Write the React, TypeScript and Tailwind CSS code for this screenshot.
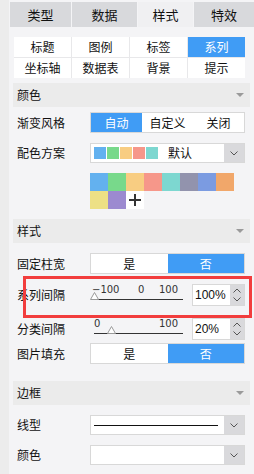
const font = { fontFamily: '"Noto Sans CJK SC", "Noto Sans", sans-serif' };

const topTabs = [
  { label: "类型", w: "w-[61px]" },
  { label: "数据", w: "w-[65px]" },
  { label: "样式", w: "w-[55px]", active: true },
  { label: "特效", w: "w-[60px]" },
];

const subTabs = ["标题", "图例", "标签", "系列", "坐标轴", "数据表", "背景", "提示"];

const schemeColors = ["bg-[#63b1ef]", "bg-[#78d98b]", "bg-[#f8cd82]", "bg-[#f6978a]", "bg-[#7dd7d0]"];

const palette = [
  "bg-[#63b1ef]",
  "bg-[#78d98b]",
  "bg-[#f8cd82]",
  "bg-[#f6978a]",
  "bg-[#7dd7d0]",
  "bg-[#9293ad]",
  "bg-[#7b9be1]",
  "bg-[#f1a76a]",
  "bg-[#ede085]",
  "bg-[#9c8ad0]",
];

function SectionHeader({ title }: { title: string }) {
  return (
    <div className="flex h-[24px] items-center justify-between bg-[#ebebeb] pl-[4px] pr-[6px] text-[12px] text-[#111]">
      <span>{title}</span>
      <span className="h-0 w-0 border-x-[4px] border-t-[4px] border-x-transparent border-t-[#9a9a9a]" />
    </div>
  );
}

function Row({ label, children, className = "" }: { label: string; children: React.ReactNode; className?: string }) {
  return (
    <div className={`flex items-center ${className}`}>
      <span className="w-[77px] pl-[4px] text-[12px] text-[#111]">{label}</span>
      <div className="w-[155px]">{children}</div>
    </div>
  );
}

function Toggle({ options, active }: { options: string[]; active: number }) {
  return (
    <div className="flex h-[21px] border border-[#d8d8d8] bg-white text-[12px]">
      {options.map((o, i) => (
        <div
          key={o}
          className={`flex flex-1 items-center justify-center ${i === active ? "bg-[#409cf5] text-white" : "text-[#111]"}`}
        >
          {o}
        </div>
      ))}
    </div>
  );
}

function Chevron() {
  return (
    <div className="flex w-[20px] items-center justify-center bg-[#d9d9dc]">
      <svg width="8" height="5" viewBox="0 0 8 5" fill="none" stroke="#555" strokeWidth="1">
        <path d="M0.5 0.5 L4 4 L7.5 0.5" />
      </svg>
    </div>
  );
}

function Select({ children }: { children?: React.ReactNode }) {
  return (
    <div className="flex h-[20px] border border-[#d8d8d8] bg-white">
      <div className="flex flex-1 items-center px-[3px]">{children}</div>
      <Chevron />
    </div>
  );
}

function Thumb() {
  return (
    <svg width="9" height="8" viewBox="0 0 9 8" className="absolute top-[8px]">
      <path d="M4.5 0.5 L8.5 7.5 L0.5 7.5 Z" fill="#fff" stroke="#999" strokeWidth="1" />
    </svg>
  );
}

function Slider({ labels, thumb, value }: { labels: { text: string; x: string }[]; thumb: string; value: string }) {
  return (
    <div className="flex items-center">
      <div className="relative h-[22px] w-[98px]">
        {labels.map((l) => (
          <span
            key={l.text}
            className={`absolute top-[1px] text-[10px] leading-[10px] text-[#333] ${l.x}`}
            style={{ fontFamily: '"DejaVu Sans", sans-serif' }}
          >
            {l.text}
          </span>
        ))}
        <div className="absolute left-[4px] top-[15px] h-px w-[89px] bg-[#333]" />
        <div className={`absolute ${thumb}`}>
          <Thumb />
        </div>
      </div>
      <div className="ml-[4px] flex h-[22px] w-[53px] border border-[#d8d8d8] bg-white">
        <div className="flex flex-1 items-center pl-[2px] text-[12px] text-[#111]" style={{ fontFamily: '"Liberation Sans", sans-serif' }}>
          {value}
        </div>
        <div className="flex w-[14px] flex-col items-center justify-center gap-[4px] bg-[#d9d9dc]">
          <svg width="8" height="5" viewBox="0 0 8 5" fill="none" stroke="#555" strokeWidth="1">
            <path d="M0.5 4.5 L4 1 L7.5 4.5" />
          </svg>
          <svg width="8" height="5" viewBox="0 0 8 5" fill="none" stroke="#555" strokeWidth="1">
            <path d="M0.5 0.5 L4 4 L7.5 0.5" />
          </svg>
        </div>
      </div>
    </div>
  );
}

export default function App() {
  return (
    <div className="relative flex h-[474px] w-[254px] overflow-hidden bg-[#f4f4f6]" style={font}>
      <div className="w-[10px] bg-[#ececec]" />
      <div className="flex-1 pt-[2px]">
        <div className="flex gap-px pl-px">
          {topTabs.map((t) => (
            <div
              key={t.label}
              className={`flex h-[25px] items-center justify-center text-[13px] text-[#111] ${t.w} ${t.active ? "bg-[#f0f0f2]" : "bg-[#d8d9dc]"}`}
            >
              {t.label}
            </div>
          ))}
        </div>

        <div className="px-[4px]">
          <div className="ml-px mt-[10px] grid w-[231px] grid-cols-4 gap-px bg-[#e8e8ea]">
            {subTabs.map((s) => (
              <div
                key={s}
                className={`flex h-[20px] items-center justify-center text-[12px] ${s === "系列" ? "bg-[#409cf5] text-white" : "bg-white text-[#111]"}`}
              >
                {s}
              </div>
            ))}
          </div>

          <div className="mt-[5px]">
            <SectionHeader title="颜色" />
          </div>

          <Row label="渐变风格" className="mt-[5px]">
            <Toggle options={["自动", "自定义", "关闭"]} active={0} />
          </Row>

          <Row label="配色方案" className="mt-[10px]">
            <Select>
              <div className="flex gap-px">
                {schemeColors.map((c) => (
                  <span key={c} className={`h-[12px] w-[12px] ${c}`} />
                ))}
              </div>
              <span className="ml-[10px] text-[12px] text-[#111]">默认</span>
            </Select>
          </Row>

          <div className="ml-[77px] mt-[10px] grid w-[144px] grid-cols-8">
            {palette.map((c, i) => (
              <span key={i} className={`h-[18px] ${c}`} />
            ))}
            <span className="flex h-[18px] items-center justify-center bg-white">
              <svg width="12" height="12" viewBox="0 0 12 12">
                <path d="M5 0h2v5h5v2H7v5H5V7H0V5h5z" fill="#333" />
              </svg>
            </span>
          </div>

          <div className="mt-[10px]">
            <SectionHeader title="样式" />
          </div>

          <Row label="固定柱宽" className="mt-[10px]">
            <Toggle options={["是", "否"]} active={1} />
          </Row>

          <Row label="系列间隔" className="mt-[10px]">
            <Slider
              labels={[
                { text: "−100", x: "left-[2px]" },
                { text: "0", x: "left-[48px]" },
                { text: "100", x: "left-[69px]" },
              ]}
              thumb="left-[0px] top-[0px]"
              value="100%"
            />
          </Row>

          <Row label="分类间隔" className="mt-[12px]">
            <Slider
              labels={[
                { text: "0", x: "left-[4px]" },
                { text: "100", x: "left-[69px]" },
              ]}
              thumb="left-[17px] top-[0px]"
              value="20%"
            />
          </Row>

          <Row label="图片填充" className="mt-[3px]">
            <Toggle options={["是", "否"]} active={1} />
          </Row>

          <div className="mt-[17px]">
            <SectionHeader title="边框" />
          </div>

          <Row label="线型" className="mt-[10px]">
            <Select>
              <div className="h-px w-[124px] bg-[#111]" />
            </Select>
          </Row>

          <Row label="颜色" className="mt-[10px]">
            <Select />
          </Row>
        </div>
      </div>

      <div className="absolute left-[23px] top-[276px] h-[42px] w-[229px] border-[3px] border-[#f23d3d]" />
    </div>
  );
}
